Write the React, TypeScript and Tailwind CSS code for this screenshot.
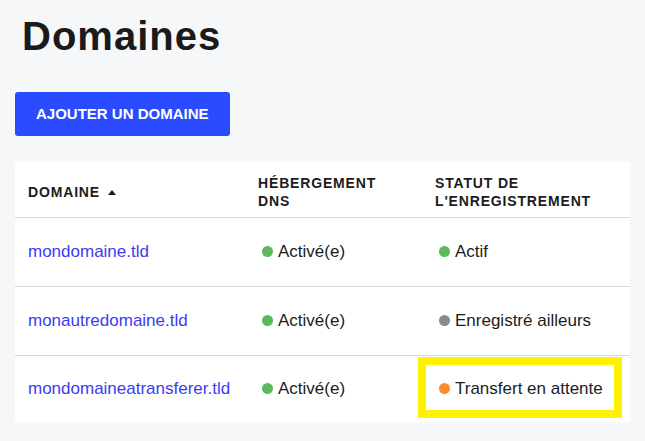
const rows = [
  { domain: "mondomaine.tld", dns: "Activé(e)", status: "Actif", color: "bg-[#5cb85c]", highlight: false },
  { domain: "monautredomaine.tld", dns: "Activé(e)", status: "Enregistré ailleurs", color: "bg-[#8a8a8a]", highlight: false },
  { domain: "mondomaineatransferer.tld", dns: "Activé(e)", status: "Transfert en attente", color: "bg-[#ff8a2a]", highlight: true },
];

function Status({ label, color }: { label: string; color: string }) {
  return (
    <span className="ml-[4px] inline-flex items-center gap-[5px]">
      <span className={`h-[11px] w-[11px] shrink-0 rounded-full ${color}`} />
      <span>{label}</span>
    </span>
  );
}

export default function App() {
  return (
    <div
      className="h-[441px] w-[645px] overflow-hidden bg-[#f6f7f9] px-[15px] text-[#1c1c1c]"
      style={{ fontFamily: '"Liberation Sans", Arial, sans-serif' }}
    >
      <h1 className="ml-[7px] pt-[16px] text-[40px] font-bold leading-[40px] tracking-[1px] text-[#1a1a1a]">
        Domaines
      </h1>

      <button className="mt-[36px] flex h-[44px] items-center rounded-[3px] bg-[#2a4bff] px-[21px] text-[15px] font-bold text-white">
        AJOUTER UN DOMAINE
      </button>

      <table className="mt-[26px] w-[615px] table-fixed border-collapse bg-white">
        <colgroup>
          <col className="w-[230px]" />
          <col className="w-[177px]" />
          <col />
        </colgroup>
        <thead>
          <tr className="h-[55px] border-b border-[#d8d8d8] text-left text-[14px] font-bold uppercase leading-[18px] tracking-[0.06em]">
            <th className="pl-[13px] pt-[6px] font-bold">
              <span className="inline-flex items-center gap-[8px]">
                DOMAINE
                <span className="h-0 w-0 border-x-[4px] border-b-[5px] border-x-transparent border-b-[#1a1a1a]" />
              </span>
            </th>
            <th className="pl-[13px] pt-[6px] font-bold">
              HÉBERGEMENT
              <br />
              DNS
            </th>
            <th className="pl-[13px] pt-[6px] font-bold">
              STATUT DE
              <br />
              L'ENREGISTREMENT
            </th>
          </tr>
        </thead>
        <tbody className="text-[17px]">
          {rows.map((row, idx) => (
            <tr
              key={row.domain}
              className={idx < rows.length - 1 ? "h-[69px] border-b border-[#d8d8d8]" : "h-[67px]"}
            >
              <td className="pl-[13px]">
                <a href="#" className="text-[#3b3bf5]">
                  {row.domain}
                </a>
              </td>
              <td className="pl-[13px]">
                <Status label={row.dns} color="bg-[#5cb85c]" />
              </td>
              <td className="relative pl-[13px]">
                <Status label={row.status} color={row.color} />
                {row.highlight ? (
                  <span className="pointer-events-none absolute left-[-4px] top-[1px] h-[61px] w-[204px] border-[8px] border-[#fff200]" />
                ) : null}
              </td>
            </tr>
          ))}
        </tbody>
      </table>
    </div>
  );
}
